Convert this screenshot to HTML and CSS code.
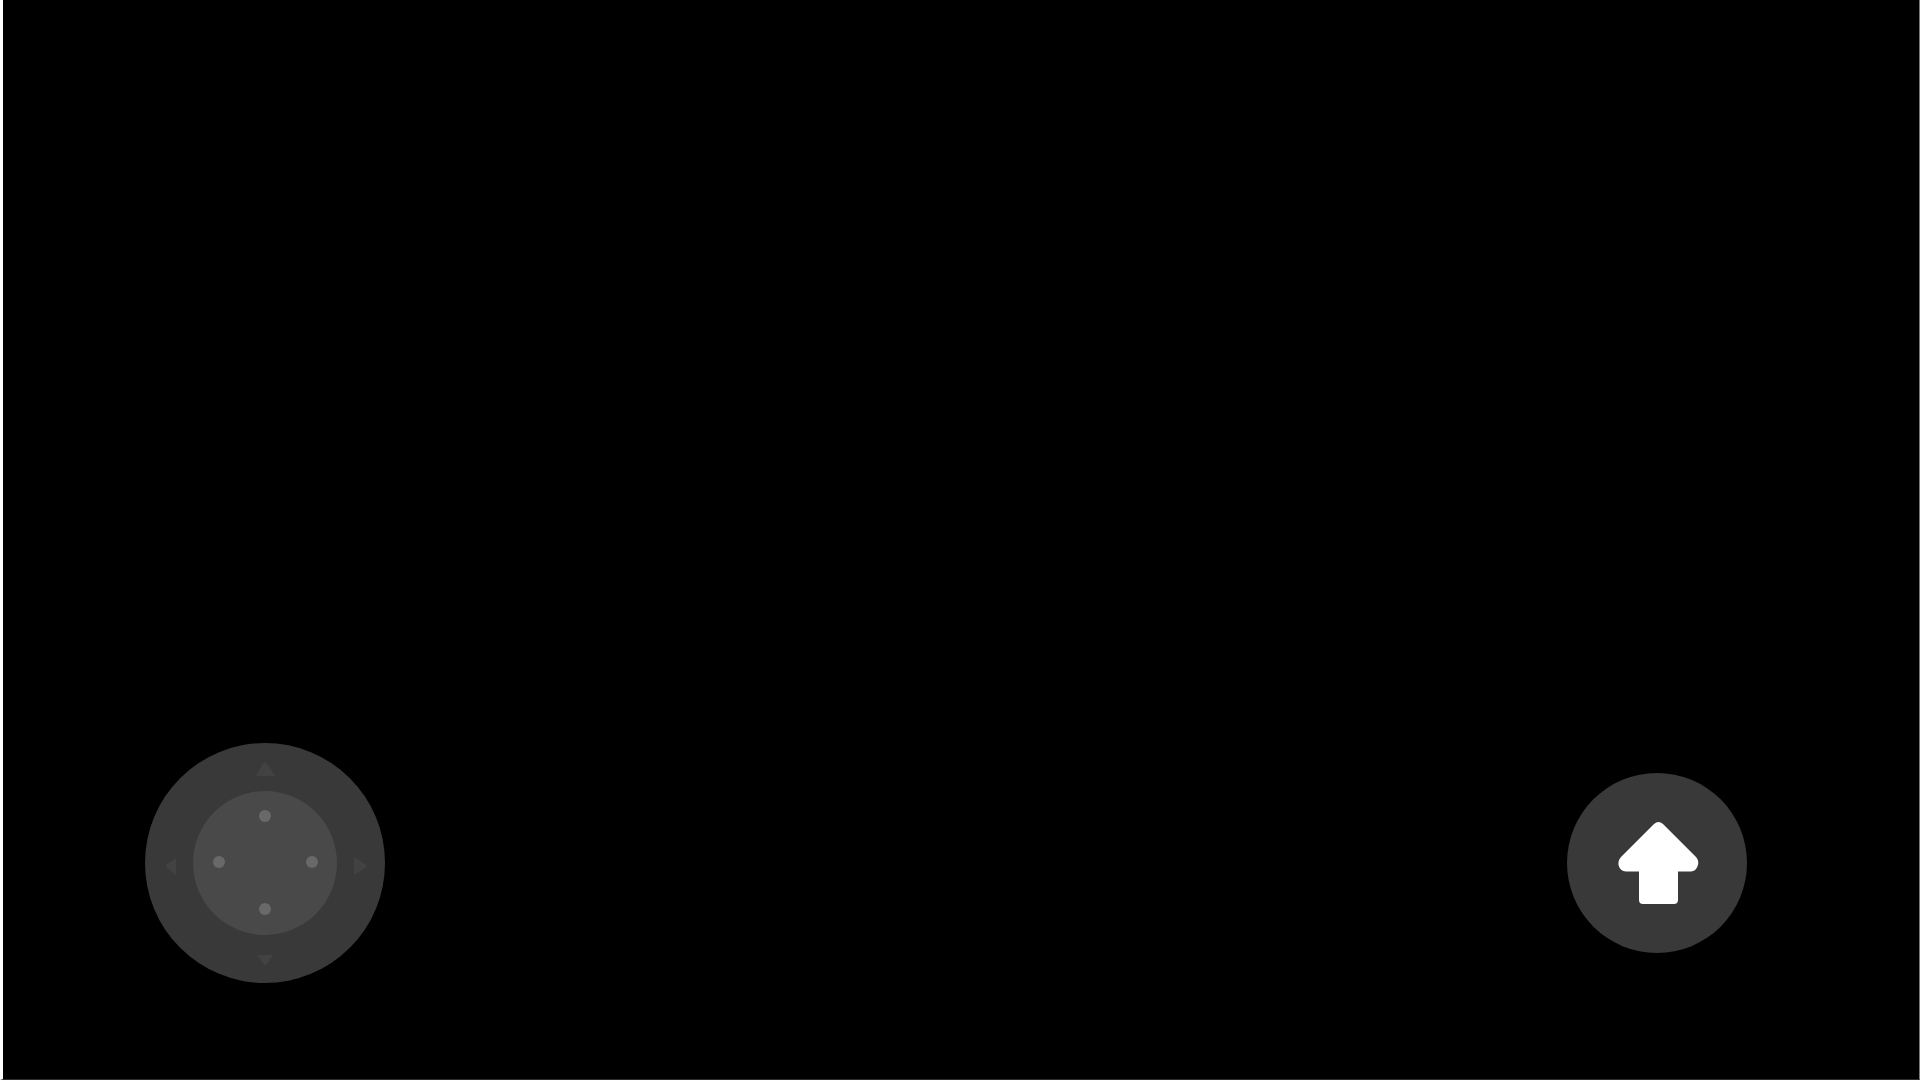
FILE: index.html
```html
<!DOCTYPE html>
<html lang="en">
<head>
    <meta charset="UTF-8">
    <meta name="viewport" content="width=device-width, initial-scale=1.0">
    <title>Touch Controls</title>
    <link rel="stylesheet" href="styles.css">
</head>
<body>
    <main class="game">
        <div class="controls">
            <div class="joystick">
                <!-- Direction arrows on the outer ring -->
                <svg class="ring" viewBox="0 0 240 240" aria-hidden="true">
                    <path d="M111 33 L117 22 Q120 17 123 22 L130 33 Z" />
                    <path d="M112 212 L128 212 L122 221 Q120 223 118 221 Z" />
                    <path d="M31 115 L31 132 L22 125 Q20 123 22 121 Z" />
                    <path d="M209 114 L220 121 Q222 123 220 125 L209 132 Z" />
                </svg>
                <button class="knob" type="button" aria-label="Move">
                    <svg viewBox="0 0 144 144" aria-hidden="true">
                        <circle cx="72" cy="25" r="6" />
                        <circle cx="26" cy="71" r="6" />
                        <circle cx="119" cy="71" r="6" />
                        <circle cx="72" cy="118" r="6" />
                    </svg>
                </button>
            </div>
            <button class="jump" type="button" aria-label="Jump">
                <svg viewBox="0 0 180 180" aria-hidden="true">
                    <path d="M87 51 Q91.500 47 96 51 L129 84 Q132 87 131 92 Q129 98.500 124 98.500 L111 98.500 L111 127 Q111 131 107 131 L76 131 Q72 131 72 127 L72 98.500 L59 98.500 Q53 98 51.500 92 Q51 87 54 84 Z" />
                </svg>
            </button>
        </div>
    </main>
</body>
</html>
```

FILE: styles.css
```css
* {
    box-sizing: border-box;
}
body {
    margin: 0;
    background-color: black;
}
.game {
    display: flex;
    flex-direction: column;
    justify-content: flex-end;
    min-height: 100vh;
    border-left: 3px solid white;
    border-right: 1px solid #777;
    border-bottom: 1px solid #2c2c2a;
}
.controls {
    display: flex;
    align-items: center;
    justify-content: space-between;
    padding: 0 172px 96px 142px;
}
button {
    border: none;
    padding: 0;
    border-radius: 50%;
    cursor: pointer;
}
svg {
    display: block;
    width: 100%;
    height: 100%;
}
.joystick {
    display: grid;
    place-items: center;
    width: 240px;
    height: 240px;
    border-radius: 50%;
    background-color: #393939;
}
.ring,
.knob {
    grid-area: 1 / 1;
}
.ring {
    fill: #424242;
}
.knob {
    width: 144px;
    height: 144px;
    background-color: #494949;
    fill: #696969;
}
.jump {
    width: 180px;
    height: 180px;
    background-color: #393939;
    fill: white;
}
```
